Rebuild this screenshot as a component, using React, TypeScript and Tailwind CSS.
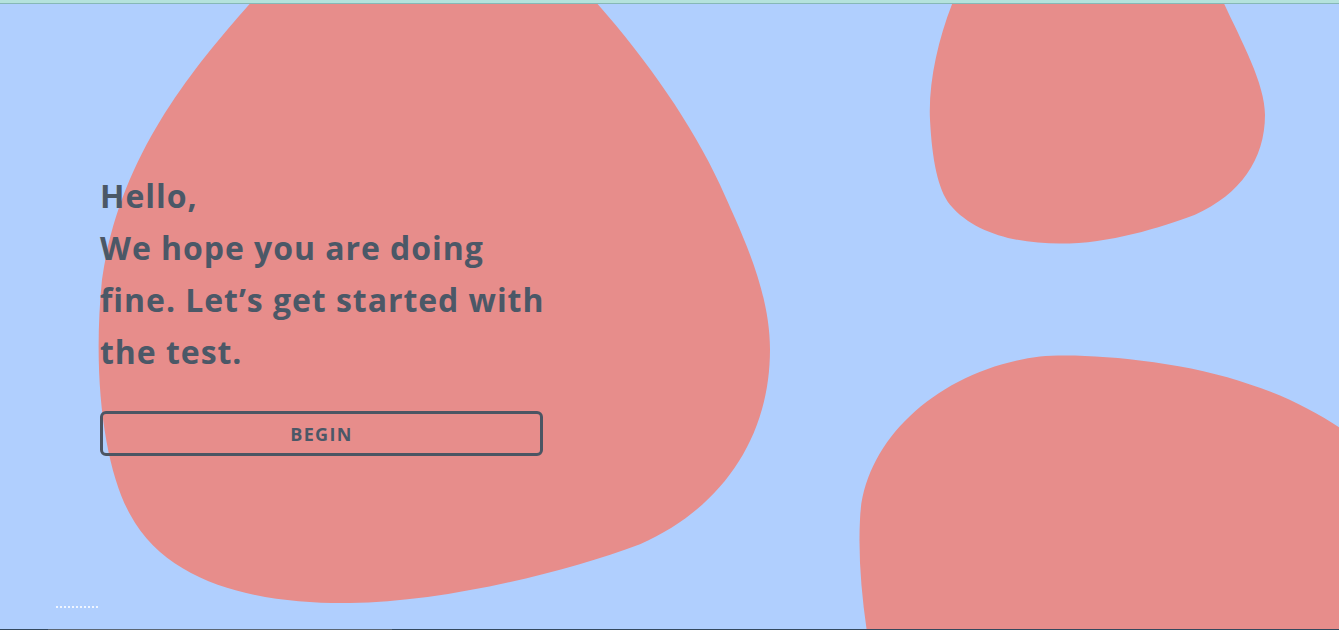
import React from "react";

function Blobs() {
  return (
    <svg
      className="absolute inset-0 h-full w-full"
      viewBox="0 0 1339 626"
      preserveAspectRatio="none"
      aria-hidden="true"
    >
      <g transform="translate(0,-4)">
        <path
          fill="#e78d8b"
          d="M 262 -10 C 200 60 120 150 102 280 C 92 380 105 470 130 515 C 170 590 270 605 350 604 C 440 603 560 575 640 545 C 720 510 770 440 770 350 C 770 290 740 230 720 185 C 690 120 640 50 585 -10 Z"
        />
        <path
          fill="#e78d8b"
          d="M 958 -10 C 940 30 928 80 930 120 C 932 160 938 190 950 205 C 975 235 1020 244 1060 244 C 1110 244 1160 228 1195 215 C 1240 195 1265 160 1265 115 C 1265 80 1235 30 1218 -10 Z"
        />
        <path
          fill="#e78d8b"
          d="M 868 640 C 862 600 858 560 860 520 C 863 440 940 370 1040 357 C 1080 353 1180 360 1250 385 C 1290 398 1320 415 1345 432 L 1345 640 Z"
        />
      </g>
    </svg>
  );
}

export default function App() {
  const font = { fontFamily: '"Open Sans", "Noto Sans", sans-serif' };
  return (
    <div className="flex h-[630px] w-[1339px] flex-col overflow-hidden bg-[#b0cffe]" style={font}>
      <div className="h-[3px] bg-[#b4e2dc]" />
      <div className="h-px bg-[#86b8b6]" />
      <main className="relative flex-1">
        <Blobs />
        <div className="relative flex flex-col pl-[100px] pt-[166px]">
          <h1 className="w-[470px] text-[32px] leading-[52px] font-bold text-[#4b5867] tracking-[0.95px]">
            <span className="block">Hello,</span>
            <span className="block">We hope you are doing</span>
            <span className="block">fine. Let’s get started with</span>
            <span className="block">the test.</span>
          </h1>
          <button className="mt-[33px] flex h-[45px] w-[443px] items-center justify-center rounded-[6px] border-[3px] border-[#4b5563] pt-px text-[18px] font-bold tracking-[1.3px] text-[#4b5867]">
            BEGIN
          </button>
        </div>
        <div className="absolute bottom-[21px] left-[56px] flex gap-[2px]">
          {Array.from({ length: 11 }).map((_, i) => (
            <span key={i} className="h-[2px] w-[2px] bg-white/80" />
          ))}
        </div>
      </main>
      <div className="flex h-px">
        <div className="w-[48px] bg-[#34495e]" />
        <div className="w-[344px] bg-[#5b6672]" />
        <div className="flex-1 bg-[#34495e]" />
      </div>
    </div>
  );
}
